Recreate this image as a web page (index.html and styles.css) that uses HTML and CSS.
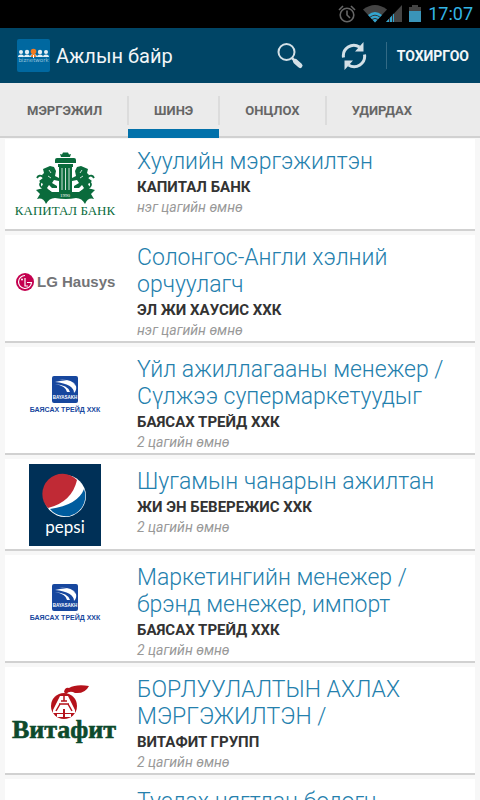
FILE: index.html
```html
<!DOCTYPE html>
<html lang="mn">
<head>
  <meta charset="UTF-8" />
  <title>Ажлын байр</title>
  <meta name="viewport" content="width=device-width, initial-scale=1.0" />
  <link rel="stylesheet" href="styles.css">
</head>
<body>
  <div class="status-bar">
    <svg width="18" height="20" viewBox="0 0 18 20" fill="none" stroke="#666" stroke-width="1.6">
      <circle cx="9" cy="11" r="6.8" />
      <path d="M9 6.500V11l3 3M1 6l4-4M17 6l-4-4" />
    </svg>
    <svg width="39" height="20" viewBox="0 0 39 20">
      <path d="M0 5.500q12-9 24 0L12 18.500z" fill="#444" />
      <path d="M5 11q7-6 14 0l-7 7.500z" fill="#33a5cf" />
      <path d="M7 13.200q5-4 10 0M9 15.500q3-2.200 6 0" fill="none" stroke="#333" />
      <path d="M39 1v17H23z" fill="#444" />
      <path d="M31 9.500V18h-8z" fill="#33a5cf" />
      <path d="M26.500 14v4M29.500 11v7" stroke="#333" />
    </svg>
    <svg width="12" height="20" viewBox="0 0 12 20">
      <path d="M0 3h3V1h6v2h3v15H0z" fill="#444" />
      <path d="M0 7h12v11H0z" fill="#3a94b8" />
    </svg>
    <span class="clock">17:07</span>
  </div>

  <header class="action-bar">
    <svg class="app-icon" width="33" height="33" viewBox="0 0 33 33">
      <rect width="33" height="33" rx="2" fill="#0068a0" />
      <g fill="#e4eef4">
        <circle cx="4" cy="13" r="2" /><circle cx="10" cy="13" r="2.200" />
        <circle cx="23" cy="13" r="2.200" /><circle cx="29" cy="13" r="2" />
        <path d="M1 18q0-2.500 3-2.500t3 2.500zM7 18q0-2.500 3-2.500t3 2.500zM13 18q0-3 3.500-3t3.500 3zM20 18q0-2.500 3-2.500t3 2.500zM26 18q0-2.500 3-2.500t3 2.500z" />
      </g>
      <circle cx="16.500" cy="12.500" r="2.800" fill="#f47b20" />
      <path d="M14 18q0-3 2.500-3t2.500 3z" fill="#f47b20" />
      <path d="M16 16h1v3h-1z" fill="#fff" />
      <text x="16.500" y="23" font-size="5.500" fill="#8fc0dc" text-anchor="middle" class="logo-wide">biznetwork</text>
    </svg>
    <h1>Ажлын байр</h1>
    <button type="button" class="icon-button" aria-label="Хайх">
      <svg width="28" height="28" viewBox="0 0 28 28" fill="none" stroke="#d3e0e7">
        <circle cx="10.500" cy="10" r="8" stroke-width="2" />
        <path d="M16 16l3 3" stroke-width="2.500" />
        <path d="M19.500 19.500l4.500 4" stroke-width="5" stroke-linecap="round" />
      </svg>
    </button>
    <button type="button" class="icon-button" aria-label="Шинэчлэх">
      <svg width="28" height="28" viewBox="0 0 28 28">
        <path d="M3.500 15.500A10.500 10.500 0 0 1 19.500 5M24.500 12.500A10.500 10.500 0 0 1 8.500 23" fill="none" stroke="#d3e0e7" stroke-width="3" />
        <path d="M23.500 0v9.500H15zM4.500 28v-9.500H13z" fill="#d3e0e7" />
      </svg>
    </button>
    <button type="button" class="settings">ТОХИРГОО</button>
  </header>

  <nav class="tabs">
    <a href="#category">МЭРГЭЖИЛ</a>
    <a href="#new" class="active">ШИНЭ</a>
    <a href="#featured">ОНЦЛОХ</a>
    <a href="#manage">УДИРДАХ</a>
  </nav>

  <main class="jobs">
    <article class="job">
      <svg class="logo" viewBox="0 0 108 82" role="img" aria-label="Капитал Банк">
        <g fill="#0a6b3c">
          <path d="M44 16q0-2 2-2h17q2 0 2 2v3H44zM47 20h15v3H47zM48 23h13v25H48z" />
          <path d="M50 13l-1-3 2 .5 1-2h5l1 2 2-.5-1 3z" />
          <path d="M25 46q9-4 16 2h27q7-6 16-2l-4 4 3 5q-6-2-9 5-3-6-9-6-10 2-21 0-6 0-9 6-3-7-9-5l3-5z" />
          <!-- lions -->
          <path d="M39 22l4 1 2 4-1 5 4 2v3l-5-1-2 3 5 3v2h-5l-3-3-2 3 4 4h-7q-4-4-1-8l-4-3 4-3-1-3 2-2-1-4z" />
          <path d="M70 22l-4 1-2 4 1 5-4 2v3l5-1 2 3-5 3v2h5l3-3 2 3-4 4h7q4-4 1-8l4-3-4-3 1-3-2-2 1-4z" />
        </g>
        <g fill="none" stroke="#0a6b3c" stroke-width="1.800">
          <path d="M33 45q-6-3-3-7 4-3 2-5-4-3-6 1" />
          <path d="M76 45q6-3 3-7-4-3-2-5 4-3 6 1" />
        </g>
        <path d="M51 24v22M54.500 24v22M58 24v22" stroke="#fff" stroke-width=".8" />
        <path d="M38 26l2 3M37 32l3 2M71 26l-2 3M72 32l-3 2" stroke="#fff" stroke-width=".8" />
        <text x="54" y="53" font-size="5" fill="#fff" text-anchor="middle" class="logo-serif">1990</text>
        <text x="54" y="71" font-size="13" fill="#0a6b3c" text-anchor="middle" class="logo-serif">КАПИТАЛ БАНК</text>
      </svg>
      <div class="info">
        <h2><a href="#job-1">Хуулийн мэргэжилтэн</a></h2>
        <p class="company">КАПИТАЛ БАНК</p>
        <p class="time">нэг цагийн өмнө</p>
      </div>
    </article>

    <article class="job">
      <svg class="logo" viewBox="0 0 108 82" role="img" aria-label="LG Hausys">
        <circle cx="14" cy="42" r="9" fill="#c4004f" />
        <path d="M14 35.500a6.500 6.500 0 1 0 6.500 7H16M14 38v8h3" fill="none" stroke="#fff" stroke-width="1.200" />
        <circle cx="11" cy="39.500" r="1" fill="#fff" />
        <text x="26" y="47" font-size="15" font-weight="700" fill="#737477" class="logo-sans">LG Hausys</text>
      </svg>
      <div class="info">
        <h2><a href="#job-2">Солонгос-Англи хэлний орчуулагч</a></h2>
        <p class="company">ЭЛ ЖИ ХАУСИС ХХК</p>
        <p class="time">нэг цагийн өмнө</p>
      </div>
    </article>

    <article class="job">
      <svg class="logo" viewBox="0 0 108 82" role="img" aria-label="Баясах Трейд">
        <rect x="41" y="24" width="26" height="27" rx="2" fill="#17479e" />
        <path d="M44 30q16-4 21 4 1 4-2 7 0-9-19-11zM48 28q12-1 17 5-6-5-17-5zM44 32q13 1 15 8h-3q-1-6-12-8z" fill="#fff" />
        <text x="54" y="47" font-size="4.500" font-weight="700" fill="#fff" text-anchor="middle" class="logo-sans">BAYASAKH</text>
        <text x="54" y="60" font-size="7" font-weight="700" fill="#17479e" text-anchor="middle" class="logo-sans">БАЯСАХ ТРЕЙД ХХК</text>
      </svg>
      <div class="info">
        <h2><a href="#job-3">Үйл ажиллагааны менежер / Сүлжээ супермаркетуудыг</a></h2>
        <p class="company">БАЯСАХ ТРЕЙД ХХК</p>
        <p class="time">2 цагийн өмнө</p>
      </div>
    </article>

    <article class="job">
      <svg class="logo" viewBox="0 0 108 82" role="img" aria-label="Pepsi">
        <path d="M18 0h72v82H18z" fill="#003057" />
        <circle cx="54" cy="32" r="21" fill="#fff" />
        <path d="M37 44A20 20 0 0 1 66 16Q61 38 37 44z" fill="#c02a35" />
        <path d="M39 45q28-4 34-20a20 20 0 0 1-34 20z" fill="#005c9e" />
        <text x="54" y="69" font-size="17" fill="#fff" text-anchor="middle" class="logo-round">pepsi</text>
      </svg>
      <div class="info">
        <h2><a href="#job-4">Шугамын чанарын ажилтан</a></h2>
        <p class="company">ЖИ ЭН БЕВЕРЕЖИС ХХК</p>
        <p class="time">2 цагийн өмнө</p>
      </div>
    </article>

    <article class="job">
      <svg class="logo" viewBox="0 0 108 82" role="img" aria-label="Баясах Трейд">
        <rect x="41" y="24" width="26" height="27" rx="2" fill="#17479e" />
        <path d="M44 30q16-4 21 4 1 4-2 7 0-9-19-11zM48 28q12-1 17 5-6-5-17-5zM44 32q13 1 15 8h-3q-1-6-12-8z" fill="#fff" />
        <text x="54" y="47" font-size="4.500" font-weight="700" fill="#fff" text-anchor="middle" class="logo-sans">BAYASAKH</text>
        <text x="54" y="60" font-size="7" font-weight="700" fill="#17479e" text-anchor="middle" class="logo-sans">БАЯСАХ ТРЕЙД ХХК</text>
      </svg>
      <div class="info">
        <h2><a href="#job-5">Маркетингийн менежер / брэнд менежер, импорт</a></h2>
        <p class="company">БАЯСАХ ТРЕЙД ХХК</p>
        <p class="time">2 цагийн өмнө</p>
      </div>
    </article>

    <article class="job">
      <svg class="logo" viewBox="0 0 108 82" role="img" aria-label="Витафит">
        <path d="M53 20q1-5 5-4 7-4 20-2-4 8-14 7-5-3-9 1z" fill="#b5121b" />
        <circle cx="53" cy="34" r="13" fill="#b5121b" />
        <path d="M49 24h8l7 14v3H54v-4h-2v4H42v-3zM46 42h6v3h-6zM54 42h6v3h-6z" fill="#fff" />
        <path d="M53 24v5M48 32h10M45 39l4-7M61 39l-4-7M50 29h6" stroke="#b5121b" stroke-width="1.500" />
        <text x="53" y="66" font-size="26" font-weight="700" fill="#0d4a2c" stroke="#0d4a2c" stroke-width=".6" text-anchor="middle" class="logo-serif">Витафит</text>
      </svg>
      <div class="info">
        <h2><a href="#job-6">БОРЛУУЛАЛТЫН АХЛАХ МЭРГЭЖИЛТЭН /</a></h2>
        <p class="company">ВИТАФИТ ГРУПП</p>
        <p class="time">2 цагийн өмнө</p>
      </div>
    </article>

    <article class="job">
      <div class="logo"></div>
      <div class="info">
        <h2><a href="#job-7">Туслах нягтлан бодогч</a></h2>
      </div>
    </article>
  </main>
</body>
</html>
```
FILE: styles.css
```css
* {
  box-sizing: border-box;
}
body {
  display: flex;
  flex-direction: column;
  height: 100vh;
  margin: 0;
  background-color: #f7f7f7;
  font-family: Roboto, "Noto Sans", sans-serif;
}
h1, h2, p {
  margin: 0;
}
a {
  color: inherit;
  text-decoration: none;
}
button {
  padding: 0;
  border: none;
  background: none;
  color: #f2f6f8;
  font-family: inherit;
  cursor: pointer;
}

/* status bar */
.status-bar {
  display: flex;
  flex: none;
  align-items: center;
  justify-content: flex-end;
  gap: 7px;
  height: 28px;
  padding-right: 7px;
  background-color: #000;
}
.clock {
  color: #33b5e5;
  font-size: 18px;
  line-height: 28px;
}

/* action bar */
.action-bar {
  display: flex;
  flex: none;
  align-items: center;
  height: 55px;
  padding: 0 11px 0 17px;
  background-color: #004566;
}
h1 {
  flex: 1;
  padding-left: 6px;
  color: #f2f6f8;
  font-size: 20px;
  font-weight: 400;
}
.icon-button {
  display: flex;
  justify-content: center;
  width: 64px;
}
.settings {
  height: 27px;
  padding-left: 10px;
  border-left: 1px solid #336a85;
  font-size: 14px;
  font-weight: 700;
}

/* tabs */
.tabs {
  display: flex;
  flex: none;
  height: 55px;
  padding-left: 1px;
  border-bottom: 2px solid #d1d1d1;
  background-color: #ebebeb;
}
.tabs a {
  position: relative;
  padding: 0 26px;
  color: #666;
  font-size: 13px;
  font-weight: 700;
  line-height: 55px;
}
.tabs a + a::before {
  content: "";
  position: absolute;
  top: 13px;
  left: -1px;
  width: 2px;
  height: 29px;
  background-color: #dcdcdc;
}
.tabs .active::after {
  content: "";
  position: absolute;
  right: 0;
  bottom: -2px;
  left: 0;
  height: 9px;
  background-color: #0271aa;
}

/* job list */
.jobs {
  display: flex;
  flex: 1;
  flex-direction: column;
  gap: 4px;
  min-height: 0;
  padding: 1px 5px 0;
  overflow-y: auto;
  scrollbar-width: none;
}
.job {
  display: flex;
  flex: none;
  align-items: flex-start;
  gap: 18px;
  padding: 0 6px 1px;
  border-bottom: 2px solid #d1d1d1;
  background-color: #fff;
}
.logo {
  flex: none;
  width: 108px;
  height: 82px;
  margin: 5px 0 2px;
}
.info {
  flex: 1;
  padding-top: 9px;
}
h2 {
  margin-bottom: 2px;
  color: #2480ad;
  font-size: 23px;
  font-weight: 300;
  line-height: 27px;
}
.company {
  color: #333;
  font-size: 15px;
  font-weight: 700;
  line-height: 20px;
}
.time {
  color: #999;
  font-size: 14px;
  font-style: italic;
  line-height: 20px;
}
.logo-sans {
  font-family: "Liberation Sans", Arial, sans-serif;
}
.logo-serif {
  font-family: "Liberation Serif", "Times New Roman", serif;
}
.logo-round {
  font-family: Lato, sans-serif;
}
.logo-wide {
  font-family: "DejaVu Sans", sans-serif;
}
```
